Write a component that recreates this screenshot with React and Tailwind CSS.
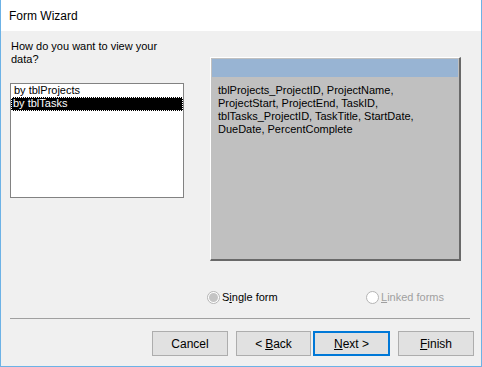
const fields =
  "tblProjects_ProjectID, ProjectName, ProjectStart, ProjectEnd, TaskID, tblTasks_ProjectID, TaskTitle, StartDate, DueDate, PercentComplete";

const Button = ({ children, primary, className = "" }) => (
  <div
    className={`flex items-center justify-center h-[25px] bg-[#e1e1e1] text-[12px] text-black ${
      primary ? "border-2 border-[#0078d7]" : "border border-[#adadad]"
    } ${className}`}
  >
    {children}
  </div>
);

const Radio = ({ checked, disabled, children, className = "" }) => (
  <div className={`flex items-center whitespace-nowrap ${className}`}>
    <span className="w-[13px] h-[13px] shrink-0 rounded-full border border-[#b5b5b5] bg-white flex items-center justify-center">
      {checked && <span className="w-[9px] h-[9px] rounded-full bg-[#c4c4c4]" />}
    </span>
    <span className={`ml-[2px] text-[11px] leading-[13px] ${disabled ? "text-[#a0a0a0]" : "text-black"}`}>
      {children}
    </span>
  </div>
);

export default function App() {
  return (
    <div
      className="w-[482px] h-[367px] flex flex-col border-x border-b border-[#6cb2e6] bg-white"
      style={{ fontFamily: '"Liberation Sans", Arial, sans-serif' }}
    >
      {/* title bar */}
      <div className="h-[31px] flex items-center pl-[8px] text-[12px] text-black bg-white shrink-0">
        Form Wizard
      </div>

      {/* body */}
      <div className="flex-1 bg-[#f0f0f0] pl-[9px] flex flex-col">
        <div className="flex items-start pt-[9px] h-[230px]">
          <div className="w-[174px] flex flex-col">
            <p className="text-[11px] leading-[13px] text-black w-[160px] pl-[1px]">
              How do you want to view your data?
            </p>
            <div className="mt-[17px] h-[115px] border border-[#828282] bg-white text-[11px] leading-[13px] text-black">
              <div className="px-[3px] h-[13px]">by tblProjects</div>
              <div className="h-[14px] bg-black text-white px-[2px] outline-1 outline-dotted outline-white -outline-offset-1">
                by tblTasks
              </div>
            </div>
          </div>

          <div className="ml-[26px] mt-[17px] w-[251px] h-[204px] border-t border-l border-t-white border-l-white border-r-2 border-b-2 border-r-[#696969] border-b-[#696969] bg-[#c0c0c0] pt-[1px] pl-[1px] pr-[1px] flex flex-col">
            <div className="h-[18px] bg-[#98b4d3] w-full" />
            <p className="mt-[7px] pl-[6px] pr-[10px] text-[11px] leading-[13px] text-black">
              {fields}
            </p>
          </div>
        </div>

        <div className="flex items-center mt-[29px] h-[14px]">
          <Radio checked className="ml-[197px] w-[159px]">
            S<span className="underline">i</span>ngle form
          </Radio>
          <Radio disabled>
            <span className="underline">L</span>inked forms
          </Radio>
        </div>

        <div className="mt-[14px] h-px w-[460px] bg-[#a0a0a0]" />

        <div className="flex mt-[12px] ml-[142px]">
          <Button className="w-[76px]">Cancel</Button>
          <Button className="w-[75px] ml-[8px]">
            &lt; <span className="underline ml-[3px]">B</span>ack
          </Button>
          <Button primary className="w-[77px] ml-[2px]">
            <span className="underline">N</span>ext &gt;
          </Button>
          <Button className="w-[76px] ml-[8px]">
            <span className="underline">F</span>inish
          </Button>
        </div>
      </div>
    </div>
  );
}
